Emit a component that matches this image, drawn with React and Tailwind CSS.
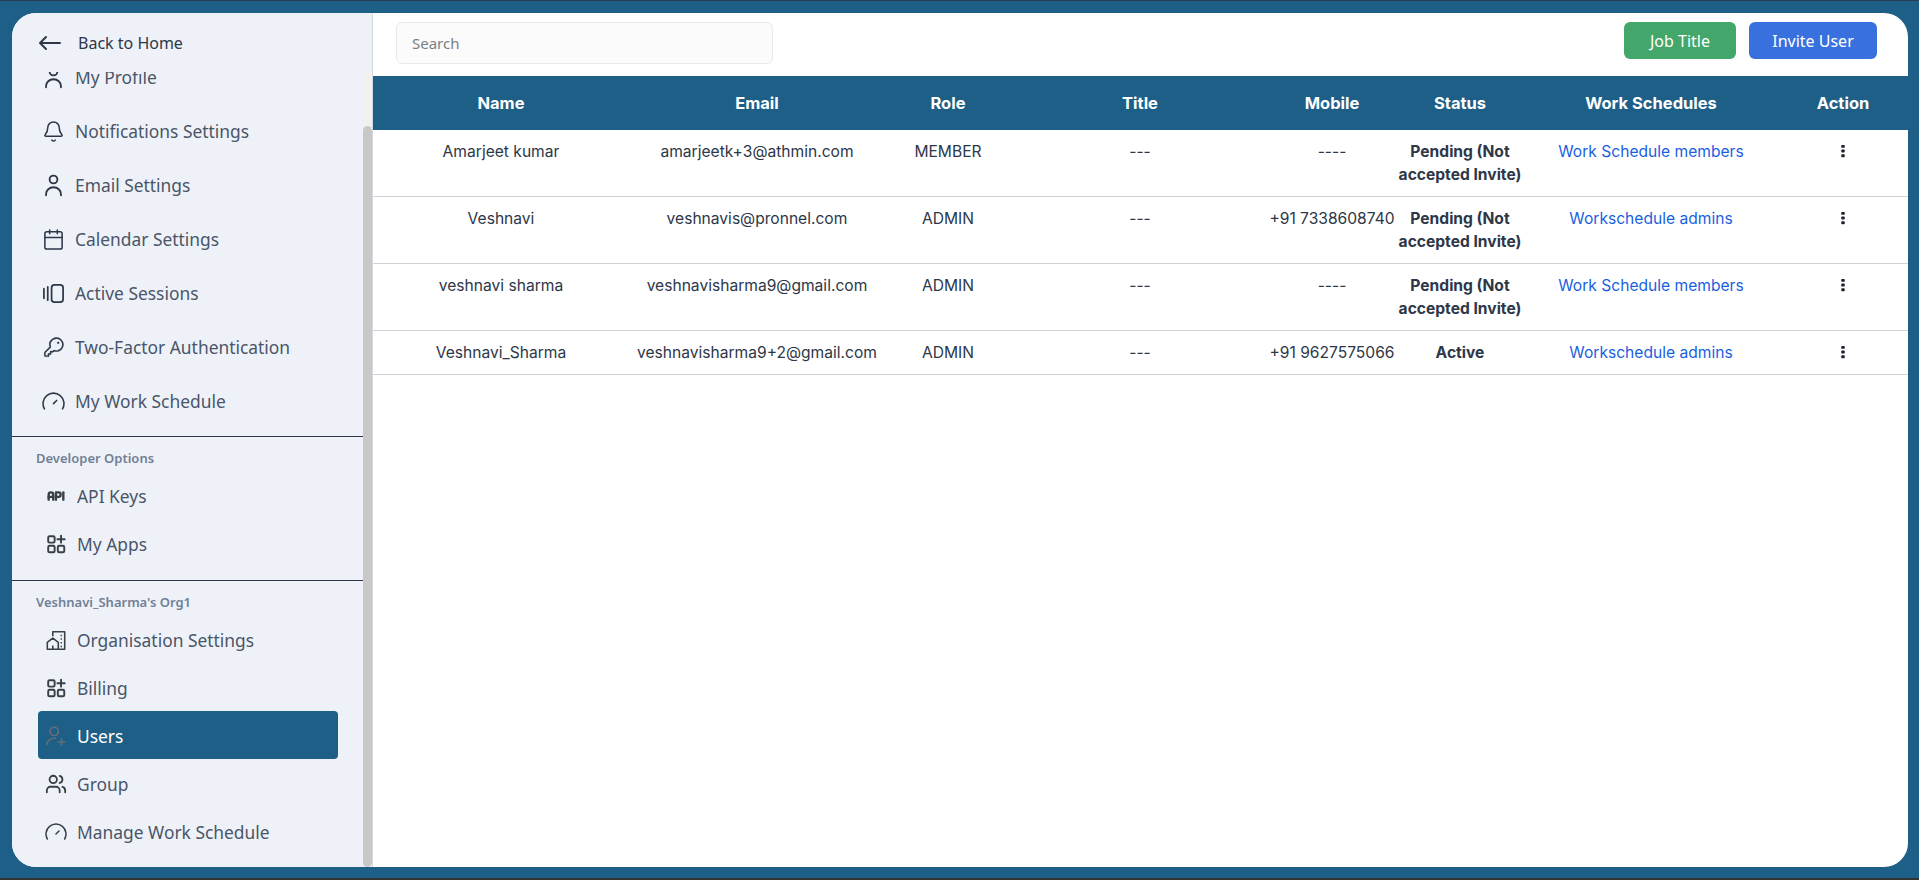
import { Bell, Calendar, Users } from 'lucide-react';
import { TbApi } from 'react-icons/tb';
import { PiKey } from 'react-icons/pi';

function BackArrow({ className }) {
  return (
    <svg viewBox="0 0 24 24" fill="none" stroke="currentColor" strokeWidth="2" strokeLinecap="round" strokeLinejoin="round" className={className}>
      <path d="M3 12h20M9 6l-6 6 6 6" />
    </svg>
  );
}

function PersonIcon({ className }) {
  return (
    <svg viewBox="0 0 20 20" fill="none" stroke="currentColor" strokeWidth="1.6" strokeLinecap="round" className={className}>
      <circle cx="10" cy="4.8" r="3.4" />
      <path d="M3.5 18.5v-1a6.5 6 0 0 1 13 0v1" />
    </svg>
  );
}

function GaugeIcon({ className }) {
  return (
    <svg viewBox="1 1 22 22" fill="none" stroke="currentColor" strokeWidth="1.5" strokeLinecap="round" className={className}>
      <path d="M3.34 19a10 10 0 1 1 17.32 0M12 14l3-3" />
    </svg>
  );
}

function SessionsIcon({ className }) {
  return (
    <svg viewBox="0 0 24 24" fill="none" stroke="currentColor" strokeWidth="1.8" strokeLinecap="round" className={className}>
      <rect x="10" y="3" width="12" height="18" rx="3" />
      <path d="M6 5v14M2 7v10" />
    </svg>
  );
}

function AppsIcon({ className }) {
  return (
    <svg viewBox="0 0 24 24" fill="none" stroke="currentColor" strokeWidth="2.1" strokeLinecap="round" className={className}>
      <rect x="3.5" y="3.5" width="7" height="7" rx="1.5" />
      <rect x="3.5" y="14" width="7" height="7" rx="1.5" />
      <rect x="14" y="14" width="7" height="7" rx="1.5" />
      <path d="M17.5 3v7.5M13.5 6.8h8" />
    </svg>
  );
}

function BuildingIcon({ className }) {
  return (
    <svg viewBox="0 0 24 24" fill="none" stroke="currentColor" strokeWidth="1.7" strokeLinejoin="round" className={className}>
      <path d="M8.5 8V3h13v19h-7" />
      <path d="M2.5 22v-7.5L8.5 10l6 4.5V22z" />
      <path d="M8.5 22v-4" />
      <path d="M17 7h1.5M17 11h1.5M17 15h1.5M17 19h1.5" />
    </svg>
  );
}

function UserAddIcon({ className }) {
  return (
    <svg viewBox="0 0 24 24" fill="none" stroke="currentColor" strokeWidth="1.8" strokeLinecap="round" className={className}>
      <circle cx="10" cy="7" r="4.5" />
      <path d="M2 21a8 8 0 0 1 9-6.5M18 15v7M14.5 18.5h7" />
    </svg>
  );
}

function DotsIcon({ className }) {
  return (
    <svg viewBox="0 0 16 16" fill="currentColor" className={className}>
      <rect x="6" y="1" width="4" height="3.4" rx="1" />
      <rect x="6" y="6.3" width="4" height="3.4" rx="1" />
      <rect x="6" y="11.6" width="4" height="3.4" rx="1" />
    </svg>
  );
}

function ApiIcon({ className }) {
  return <TbApi className={className} strokeWidth={2.6} />;
}

const accountItems = [
  { id: 'profile', icon: PersonIcon, label: 'My Profile' },
  { id: 'notifications', icon: Bell, label: 'Notifications Settings' },
  { id: 'email', icon: PersonIcon, label: 'Email Settings' },
  { id: 'calendar', icon: Calendar, label: 'Calendar Settings' },
  { id: 'sessions', icon: SessionsIcon, label: 'Active Sessions' },
  { id: 'twofactor', icon: PiKey, label: 'Two-Factor Authentication' },
  { id: 'schedule', icon: GaugeIcon, label: 'My Work Schedule' },
];

const developerItems = [
  { id: 'api', icon: ApiIcon, label: 'API Keys' },
  { id: 'apps', icon: AppsIcon, label: 'My Apps' },
];

const orgItems = [
  { id: 'org', icon: BuildingIcon, label: 'Organisation Settings' },
  { id: 'billing', icon: AppsIcon, label: 'Billing' },
  { id: 'users', icon: UserAddIcon, label: 'Users', active: true },
  { id: 'group', icon: Users, label: 'Group' },
  { id: 'manage', icon: GaugeIcon, label: 'Manage Work Schedule' },
];

const columns = [
  { label: 'Name', width: 'w-[256px]' },
  { label: 'Email', width: 'w-[256px]' },
  { label: 'Role', width: 'w-[126px]' },
  { label: 'Title', width: 'w-[258px]' },
  { label: 'Mobile', width: 'w-[126px]' },
  { label: 'Status', width: 'w-[130px]' },
  { label: 'Work Schedules', width: 'w-[252px]' },
  { label: 'Action', width: 'w-[132px]' },
];

const users = [
  { name: 'Amarjeet kumar', email: 'amarjeetk+3@athmin.com', role: 'MEMBER', mobile: '----', status: 'Pending (Not accepted Invite)', schedule: 'Work Schedule members' },
  { name: 'Veshnavi', email: 'veshnavis@pronnel.com', role: 'ADMIN', mobile: '+91 7338608740', status: 'Pending (Not accepted Invite)', schedule: 'Workschedule admins' },
  { name: 'veshnavi sharma', email: 'veshnavisharma9@gmail.com', role: 'ADMIN', mobile: '----', status: 'Pending (Not accepted Invite)', schedule: 'Work Schedule members' },
  { name: 'Veshnavi_Sharma', email: 'veshnavisharma9+2@gmail.com', role: 'ADMIN', mobile: '+91 9627575066', status: 'Active', schedule: 'Workschedule admins' },
];

function AccountRow({ item }) {
  return (
    <div className="h-[54px] flex items-center pl-[30px] text-[#4a5568] text-[17.4px]">
      <span className="w-[23px] mr-[10px] flex justify-center shrink-0 text-[#2d3748]">
        <item.icon className="w-[23px] h-[23px]" strokeWidth={1.6} />
      </span>
      <span>{item.label}</span>
    </div>
  );
}

function OrgRow({ item }) {
  return (
    <div className={`h-[48px] w-[300px] ml-[26px] flex items-center pl-[6px] rounded text-[17.4px] ${item.active ? '-mt-[1px] mb-[1px] pt-[2px] bg-[#1d5f87] text-white' : 'text-[#4a5568]'}`}>
      <span className={`w-[23px] mr-[10px] flex justify-center shrink-0 ${item.active ? 'text-[#666e75]' : 'text-[#3a3f47]'}`}>
        <item.icon className="w-[22px] h-[22px]" />
      </span>
      <span>{item.label}</span>
    </div>
  );
}

function Sidebar() {
  return (
    <div className="w-[360px] shrink-0 bg-[#eef2f8] flex flex-col font-['Noto_Sans',sans-serif]">
      <div className="h-[59px] shrink-0 flex items-center pl-[25px] text-[#2d3748] text-[16px]">
        <BackArrow className="w-[24px] h-[24px] mr-[17px]" />
        <span>Back to Home</span>
      </div>
      <div className="flex-1 flex min-h-0">
        <div className="flex-1 overflow-hidden">
          <div className="-mt-[22px]">
            {accountItems.map((item) => (
              <AccountRow key={item.id} item={item} />
            ))}
            <div className="border-t border-[#2d3748] mt-[8px] pt-[12px]">
              <div className="pl-[24px] text-[13px] font-semibold text-[#718096] h-[18px] leading-[18px]">Developer Options</div>
              <div className="mt-[5px]">
                {developerItems.map((item) => (
                  <OrgRow key={item.id} item={item} />
                ))}
              </div>
            </div>
            <div className="border-t border-[#2d3748] mt-[12px] pt-[12px]">
              <div className="pl-[24px] text-[13px] font-semibold text-[#718096] h-[18px] leading-[18px]">Veshnavi_Sharma's Org1</div>
              <div className="mt-[5px]">
                {orgItems.map((item) => (
                  <OrgRow key={item.id} item={item} />
                ))}
              </div>
            </div>
          </div>
        </div>
        <div className="w-[9px] shrink-0 bg-[#f1f1f1] pt-[54px] flex flex-col">
          <div className="flex-1 bg-[#c8c8c8] rounded-full" />
        </div>
      </div>
    </div>
  );
}

function UsersTable() {
  return (
    <table className="table-fixed w-full border-collapse font-['Inter',sans-serif] text-[15.6px] text-[#2d3748]">
      <thead>
        <tr className="bg-[#1d5f87] text-white h-[54px]">
          {columns.map((col) => (
            <th key={col.label} className={`${col.width} font-bold text-[16.5px] text-center`}>{col.label}</th>
          ))}
        </tr>
      </thead>
      <tbody>
        {users.map((user) => (
          <tr key={user.email} className="border-b border-[#cfd2d8] align-top leading-[23px]">
            <td className="py-[10px] text-center">{user.name}</td>
            <td className="py-[10px] text-center whitespace-nowrap">{user.email}</td>
            <td className="py-[10px] text-center">{user.role}</td>
            <td className="py-[10px] text-center">---</td>
            <td className="py-[10px] text-center whitespace-nowrap">{user.mobile}</td>
            <td className="py-[10px] text-center font-bold">{user.status}</td>
            <td className="py-[10px] text-center text-[#1a5fe0]">{user.schedule}</td>
            <td className="py-[10px]">
              <DotsIcon className="w-[14px] h-[14px] mx-auto mt-[4px] text-[#1a202c]" />
            </td>
          </tr>
        ))}
      </tbody>
    </table>
  );
}

export default function App() {
  return (
    <div className="h-screen bg-[#1d5f87] border-t border-[#2e3a59] border-b-2 border-b-[#333] pt-[12px] pb-[11px] pl-[12px] pr-[11px]">
      <div className="h-full flex bg-white rounded-[24px] overflow-hidden">
        <Sidebar />
        <div className="flex-1 min-w-0 border-l border-[#d5d8de]">
          <div className="h-[63px] flex justify-between pl-[23px] pr-[31px] pt-[9px]">
            <input
              placeholder="Search"
              className="w-[377px] h-[42px] px-[15px] bg-[#fbfbfb] border border-[#e8e8ea] rounded-md font-['Noto_Sans',sans-serif] text-[15px] placeholder:text-[#7a7f87] outline-none"
            />
            <div className="flex gap-[13px] font-['Noto_Sans',sans-serif] text-[16px] text-white">
              <button className="w-[112px] h-[37px] rounded-md bg-[#43a66a]">Job Title</button>
              <button className="w-[128px] h-[37px] rounded-md bg-[#3870de]">Invite User</button>
            </div>
          </div>
          <UsersTable />
        </div>
      </div>
    </div>
  );
}
